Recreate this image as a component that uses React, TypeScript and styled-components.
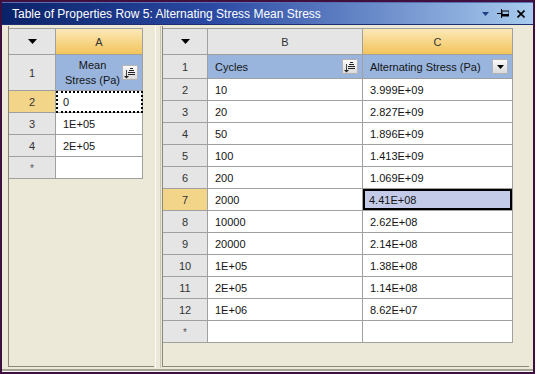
import { Fragment } from 'react';
import styled, { createGlobalStyle, css } from 'styled-components';

const Global = createGlobalStyle`
	html, body {
		margin: 0;
		padding: 0;
		background: #ffffff;
	}
	body {
		font-family: "Liberation Sans", Arial, sans-serif;
	}
`;

const Frame = styled.div`
	width: 535px;
	height: 374px;
	box-sizing: border-box;
	border: 2px solid #3f0f40;
	display: flex;
	flex-direction: column;
	background: #ece9d8;
`;

const TitleBar = styled.div`
	height: 23px;
	flex: none;
	display: flex;
	align-items: center;
	padding: 0 8px 0 10px;
	box-sizing: border-box;
	background: linear-gradient(to right, #0a2268 0%, #2b4aa4 40%, #a8cbee 100%);
	border-top: 1px solid #5a6fb0;
	border-bottom: 1px solid #1d2f72;
`;

const TitleText = styled.span`
	flex: 1;
	color: #ffffff;
	font-size: 12px;
	white-space: nowrap;
`;

const TitleTools = styled.div`
	display: flex;
	align-items: center;
	gap: 8px;
	svg {
		display: block;
	}
`;

const Body = styled.div`
	flex: 1;
	display: flex;
	padding: 1px 4px 4px 6px;
	box-shadow: inset 0 -1px 0 #fdfdf8, inset 0 -3px 0 #a7a496;
`;

const Pane = styled.div<{ $width?: number }>`
	${({ $width }) =>
		$width
			? css`
					width: ${$width}px;
					flex: none;
			  `
			: css`
					flex: 1;
			  `}
	box-sizing: border-box;
	padding-top: 2px;
	border-left: 1px solid #8a8778;
	border-bottom: 1px solid #8a8778;
	margin-bottom: 1px;
`;

const Splitter = styled.div`
	width: 6px;
	flex: none;
	box-sizing: border-box;
	border-left: 1px solid #fbfbf6;
	border-right: 1px solid #c9c6b6;
	margin: 0 1px 0 1px;
`;

const Grid = styled.div<{ $cols: string; $rows: string }>`
	display: grid;
	grid-template-columns: ${({ $cols }) => $cols};
	grid-template-rows: ${({ $rows }) => $rows};
	border-top: 1px solid #a0a0a0;
	width: max-content;
	font-size: 11px;
	color: #141414;
`;

type Kind =
	| 'corner'
	| 'col'
	| 'colSel'
	| 'row'
	| 'rowSel'
	| 'name'
	| 'data'
	| 'focus'
	| 'selected';

const kindStyles: Record<Kind, ReturnType<typeof css>> = {
	corner: css`
		background: #e5e5e5;
		justify-content: center;
	`,
	col: css`
		background: #e5e5e5;
		justify-content: center;
		color: #333;
	`,
	colSel: css`
		background: linear-gradient(#fbe8b8, #f3c55b);
		justify-content: center;
		color: #333;
	`,
	row: css`
		background: #e5e5e5;
		justify-content: center;
		color: #333;
	`,
	rowSel: css`
		background: #f2d589;
		justify-content: center;
		color: #333;
	`,
	name: css`
		background: #99b5dd;
		padding: 0 4px 0 7px;
		justify-content: space-between;
	`,
	data: css`
		background: #ffffff;
		padding-left: 7px;
	`,
	focus: css`
		background: #ffffff;
		padding-left: 7px;
		outline: 2px dotted #000;
		outline-offset: -2px;
	`,
	selected: css`
		background: #c4cbe8;
		padding-left: 6px;
		box-shadow: inset 0 0 0 2px #000;
	`,
};

const Cell = styled.div<{ $kind: Kind }>`
	box-sizing: border-box;
	border-right: 1px solid #a0a0a0;
	border-bottom: 1px solid #a0a0a0;
	display: flex;
	align-items: center;
	white-space: nowrap;
	overflow: hidden;
	${({ $kind }) => kindStyles[$kind]}
`;

const NameStack = styled.span`
	flex: 1;
	text-align: center;
	line-height: 15px;
	padding-top: 1px;
`;

const MiniButton = styled.span`
	width: 16px;
	height: 15px;
	flex: none;
	box-sizing: border-box;
	border: 1px solid #b4b4b4;
	background: linear-gradient(#fafafa, #dadada);
	display: flex;
	align-items: center;
	justify-content: center;
	svg {
		display: block;
	}
`;

const Star = styled.span`
	font-size: 10px;
	color: #555;
	padding-top: 2px;
`;

function DropArrow({ w = 9, h = 5, color = '#000' }: { w?: number; h?: number; color?: string }) {
	return (
		<svg width={w} height={h} viewBox={`0 0 ${w} ${h}`}>
			<polygon points={`0,0 ${w},0 ${w / 2},${h}`} fill={color} />
		</svg>
	);
}

function SortIcon() {
	return (
		<svg width="12" height="12" viewBox="0 0 12 12">
			<rect x="6" y="1" width="3" height="1" fill="#222" />
			<rect x="5" y="3" width="5" height="1" fill="#222" />
			<rect x="4" y="5" width="7" height="1" fill="#222" />
			<rect x="4" y="7" width="7" height="1" fill="#222" />
			<rect x="2" y="3" width="1" height="6" fill="#444" />
			<polygon points="0,9 5,9 2.5,11.5" fill="#222" />
		</svg>
	);
}

function PinIcon() {
	return (
		<svg width="12" height="9" viewBox="0 0 12 9">
			<rect x="0" y="4" width="5" height="1" fill="#000" />
			<rect x="4" y="0" width="1" height="9" fill="#000" />
			<rect x="5" y="2" width="7" height="5" fill="none" stroke="#000" strokeWidth="1" />
			<rect x="5" y="5" width="7" height="2" fill="#000" />
		</svg>
	);
}

function CloseIcon() {
	return (
		<svg width="8" height="8" viewBox="0 0 8 8">
			<path d="M0.5 0.5 L7.5 7.5 M7.5 0.5 L0.5 7.5" stroke="#000" strokeWidth="1.6" />
		</svg>
	);
}

const meanRows = ['0', '1E+05', '2E+05'];

const cycleRows: [string, string][] = [
	['10', '3.999E+09'],
	['20', '2.827E+09'],
	['50', '1.896E+09'],
	['100', '1.413E+09'],
	['200', '1.069E+09'],
	['2000', '4.41E+08'],
	['10000', '2.62E+08'],
	['20000', '2.14E+08'],
	['1E+05', '1.38E+08'],
	['2E+05', '1.14E+08'],
	['1E+06', '8.62E+07'],
];

export default function App() {
	return (
		<>
			<Global />
			<Frame>
				<TitleBar>
					<TitleText>Table of Properties Row 5: Alternating Stress Mean Stress</TitleText>
					<TitleTools>
						<DropArrow w={7} h={4} color="#1f3f85" />
						<PinIcon />
						<CloseIcon />
					</TitleTools>
				</TitleBar>
				<Body>
					<Pane $width={146}>
						<Grid $cols="47px 87px" $rows="26px 36px repeat(4, 22px)">
							<Cell $kind="corner">
								<DropArrow />
							</Cell>
							<Cell $kind="colSel">A</Cell>
							<Cell $kind="row">1</Cell>
							<Cell $kind="name">
								<NameStack>
									Mean
									<br />
									Stress (Pa)
								</NameStack>
								<MiniButton>
									<SortIcon />
								</MiniButton>
							</Cell>
							{meanRows.map((v, i) => (
								<Fragment key={v}>
									<Cell $kind={i === 0 ? 'rowSel' : 'row'}>{i + 2}</Cell>
									<Cell $kind={i === 0 ? 'focus' : 'data'}>{v}</Cell>
								</Fragment>
							))}
							<Cell $kind="row">
								<Star>*</Star>
							</Cell>
							<Cell $kind="data" />
						</Grid>
					</Pane>
					<Splitter />
					<Pane>
						<Grid $cols="45px 155px 150px" $rows="26px 24px repeat(12, 22px)">
							<Cell $kind="corner">
								<DropArrow />
							</Cell>
							<Cell $kind="col">B</Cell>
							<Cell $kind="colSel">C</Cell>
							<Cell $kind="row">1</Cell>
							<Cell $kind="name">
								<span>Cycles</span>
								<MiniButton>
									<SortIcon />
								</MiniButton>
							</Cell>
							<Cell $kind="name">
								<span>Alternating Stress (Pa)</span>
								<MiniButton>
									<DropArrow w={7} h={4} />
								</MiniButton>
							</Cell>
							{cycleRows.map(([b, c], i) => (
								<Fragment key={b}>
									<Cell $kind={i === 5 ? 'rowSel' : 'row'}>{i + 2}</Cell>
									<Cell $kind="data">{b}</Cell>
									<Cell $kind={i === 5 ? 'selected' : 'data'}>{c}</Cell>
								</Fragment>
							))}
							<Cell $kind="row">
								<Star>*</Star>
							</Cell>
							<Cell $kind="data" />
							<Cell $kind="data" />
						</Grid>
					</Pane>
				</Body>
			</Frame>
		</>
	);
}
